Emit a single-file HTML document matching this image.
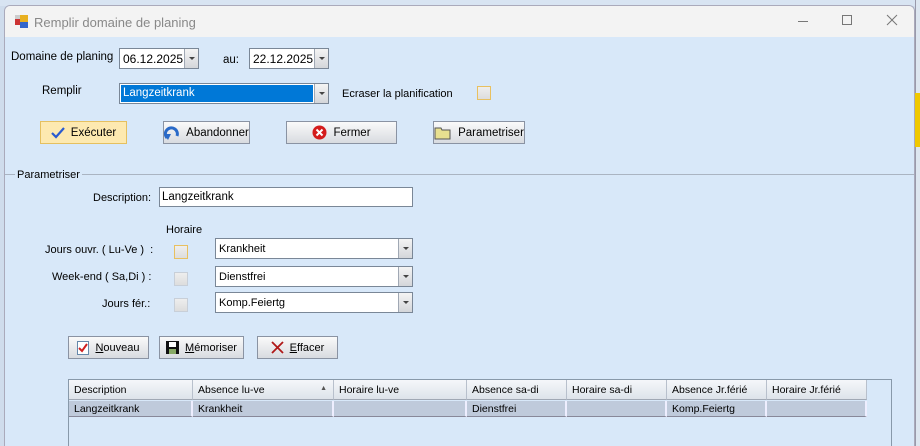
<!DOCTYPE html>
<html><head><meta charset="utf-8"><style>
*{box-sizing:border-box;margin:0;padding:0}
body{width:920px;height:446px;overflow:hidden;background:#cfdcec;font-family:"Liberation Sans",sans-serif;font-size:11.5px;color:#000;position:relative}
.a{position:absolute}
.win{left:4px;top:5px;width:911px;height:441px;background:#d8e8f9;border:1px solid #aab;border-bottom:none;border-radius:6px 6px 0 0;overflow:hidden}
.tb{left:0;top:0;width:100%;height:31px;background:#f3f3f3}
.box{background:#fff;border:1px solid #7a8797}
.dd{position:absolute;right:0;top:0;bottom:0;width:14px;background:linear-gradient(#f4f4f4,#d4d6da);border-left:1px solid #a0a8b4}
.dd:after{content:"";position:absolute;left:4px;top:8px;border:3px solid transparent;border-top:3px solid #444;border-bottom:0}
.btn{position:absolute;border:1px solid #8a93a3;background:linear-gradient(#fafafa,#d8dbe0);display:flex;align-items:center;justify-content:center;gap:6px;font-size:11.5px}
.cb{position:absolute;width:14px;height:14px;border:1px solid #e8c060;background:linear-gradient(#eee,#ddd)}
.cb2{border-color:#c8cfd8}
.t{position:absolute;white-space:nowrap}
.grid{left:63px;top:373px;width:824px;height:80px;border:1px solid #8899aa;background:#d8e8f9}
.hr{position:absolute;top:0;height:20px;border-right:1px solid #b8c0cc;background:linear-gradient(#f5f7fa,#dde3ea);border-bottom:1px solid #a0a8b4;padding:4px 5px;font-size:10.5px}
.dr{position:absolute;top:21px;height:16px;background:#bfcadb;border-right:2px solid #eef;border-bottom:1px solid #889;padding:2px 5px;font-size:10.5px}
</style></head><body>
<div class="a" style="left:0;top:0;width:920px;height:6px;background:#d8e4f2"></div>
<div class="a" style="left:915px;top:0;width:5px;height:446px;background:#dde6f0;border-left:1px solid #99a"></div>
<div class="a" style="left:915px;top:93px;width:5px;height:54px;background:#f0c800"></div>
<div class="a win">
 <div class="a tb">
  <svg class="a" style="left:9px;top:8px" width="16" height="16"><rect x="1" y="5" width="6" height="6" fill="#c33"/><rect x="6" y="1" width="8" height="7" fill="#e8b020"/><rect x="6" y="8" width="8" height="6" fill="#3366cc"/><rect x="1" y="1" width="5" height="4" fill="#ccc"/></svg>
  <div class="t" style="left:29px;top:9px;font-size:13px;color:#888">Remplir domaine de planing</div>
  <div class="a" style="left:793px;top:15px;width:10px;height:1px;background:#777"></div>
  <div class="a" style="left:837px;top:9px;width:10px;height:10px;border:1px solid #777"></div>
  <svg class="a" style="left:881px;top:8px" width="12" height="12"><path d="M1 1L11 11M11 1L1 11" stroke="#777" stroke-width="1"/></svg>
 </div>
 <div class="t" style="left:6px;top:45px">Domaine de planing</div>
 <div class="a box" style="left:114px;top:42px;width:80px;height:21px"><span class="t" style="left:3px;top:3px;font-size:12px">06.12.2025</span><div class="dd"></div></div>
 <div class="t" style="left:218px;top:48px">au:</div>
 <div class="a box" style="left:244px;top:42px;width:80px;height:21px"><span class="t" style="left:3px;top:3px;font-size:12px">22.12.2025</span><div class="dd"></div></div>
 <div class="t" style="left:37px;top:79px">Remplir</div>
 <div class="a box" style="left:114px;top:77px;width:210px;height:21px"><div class="a" style="left:1px;top:1px;right:15px;bottom:1px;background:#0078d7;color:#fff;padding:2px 2px">Langzeitkrank</div><div class="dd"></div></div>
 <div class="t" style="left:337px;top:82px;font-size:11px">Ecraser la planification</div>
 <div class="cb" style="left:472px;top:80px"></div>
 <div class="btn" style="left:35px;top:115px;width:87px;height:23px;background:#fde9b0;border-color:#e5c060"><svg width="14" height="12"><path d="M1 6L5 10L13 1" stroke="#2a5bd0" stroke-width="2.2" fill="none"/></svg>Exécuter</div>
 <div class="btn" style="left:158px;top:115px;width:87px;height:23px"><svg width="16" height="14"><path d="M3 12A6 6 0 1 1 13 10" stroke="#2a6ac8" stroke-width="3" fill="none"/><path d="M0 8L4 14L7 8Z" fill="#2a6ac8"/></svg>Abandonner</div>
 <div class="btn" style="left:281px;top:115px;width:111px;height:23px"><svg width="15" height="15"><circle cx="7.5" cy="7.5" r="7" fill="#d41c1c"/><path d="M4.5 4.5L10.5 10.5M10.5 4.5L4.5 10.5" stroke="#fff" stroke-width="2"/></svg>Fermer</div>
 <div class="btn" style="left:428px;top:115px;width:92px;height:23px"><svg width="18" height="14"><path d="M1 2H7L8 4H16V13H1Z" fill="#e8e090" stroke="#555"/></svg>Parametriser</div>
 <div class="a" style="left:0;top:168px;width:911px;height:1px;background:#aab4c2"></div>
 <div class="t" style="left:10px;top:163px;background:#d8e8f9;padding:0 2px;font-size:11px">Parametriser</div>
 <div class="t" style="left:88px;top:186px;font-size:11px">Description:</div>
 <div class="a box" style="left:154px;top:181px;width:254px;height:20px"><span class="t" style="left:2px;top:3px">Langzeitkrank</span></div>
 <div class="t" style="left:161px;top:218px;font-size:11px">Horaire</div>
 <div class="t" style="left:40px;top:238px;font-size:11px">Jours ouvr. ( Lu-Ve ) &nbsp;:</div>
 <div class="t" style="left:47px;top:265px;font-size:11px">Week-end ( Sa,Di ) :</div>
 <div class="t" style="left:97px;top:292px;font-size:11px">Jours fér.:</div>
 <div class="cb" style="left:169px;top:239px"></div>
 <div class="cb cb2" style="left:169px;top:266px"></div>
 <div class="cb cb2" style="left:169px;top:292px"></div>
 <div class="a box" style="left:210px;top:232px;width:198px;height:21px"><span class="t" style="left:3px;top:4px;font-size:11px">Krankheit</span><div class="dd"></div></div>
 <div class="a box" style="left:210px;top:260px;width:198px;height:21px"><span class="t" style="left:3px;top:4px;font-size:11px">Dienstfrei</span><div class="dd"></div></div>
 <div class="a box" style="left:210px;top:286px;width:198px;height:21px"><span class="t" style="left:3px;top:4px;font-size:11px">Komp.Feiertg</span><div class="dd"></div></div>
 <div class="btn" style="left:63px;top:330px;width:81px;height:23px;font-size:11px"><svg width="12" height="14"><rect x="0.5" y="0.5" width="11" height="13" fill="#fff" stroke="#6688aa"/><path d="M2 7L5 10L10 3" stroke="#d02020" stroke-width="2" fill="none"/></svg><span><u>N</u>ouveau</span></div>
 <div class="btn" style="left:154px;top:330px;width:85px;height:23px;font-size:11px"><svg width="13" height="13"><rect width="13" height="13" fill="#111"/><rect x="3" y="1" width="7" height="5" fill="#fff"/><rect x="3" y="8" width="7" height="5" fill="#8a6"/></svg><span><u>M</u>émoriser</span></div>
 <div class="btn" style="left:252px;top:330px;width:81px;height:23px;font-size:11px"><svg width="13" height="13"><path d="M1 1L12 12M12 1L1 12" stroke="#b01818" stroke-width="1.8"/></svg><span><u>E</u>ffacer</span></div>
 <div class="a grid">
  <div class="hr" style="left:0;width:124px">Description</div>
  <div class="hr" style="left:124px;width:141px">Absence lu-ve<span style="position:absolute;right:6px;top:5px;font-size:7px;color:#555">▲</span></div>
  <div class="hr" style="left:265px;width:133px">Horaire lu-ve</div>
  <div class="hr" style="left:398px;width:100px">Absence sa-di</div>
  <div class="hr" style="left:498px;width:100px">Horaire sa-di</div>
  <div class="hr" style="left:598px;width:100px">Absence Jr.férié</div>
  <div class="hr" style="left:698px;width:100px">Horaire Jr.férié</div>
  <div class="dr" style="left:0;width:124px">Langzeitkrank</div>
  <div class="dr" style="left:124px;width:141px">Krankheit</div>
  <div class="dr" style="left:265px;width:133px"></div>
  <div class="dr" style="left:398px;width:100px">Dienstfrei</div>
  <div class="dr" style="left:498px;width:100px"></div>
  <div class="dr" style="left:598px;width:100px">Komp.Feiertg</div>
  <div class="dr" style="left:698px;width:100px"></div>
 </div>
</div>
</body></html>
